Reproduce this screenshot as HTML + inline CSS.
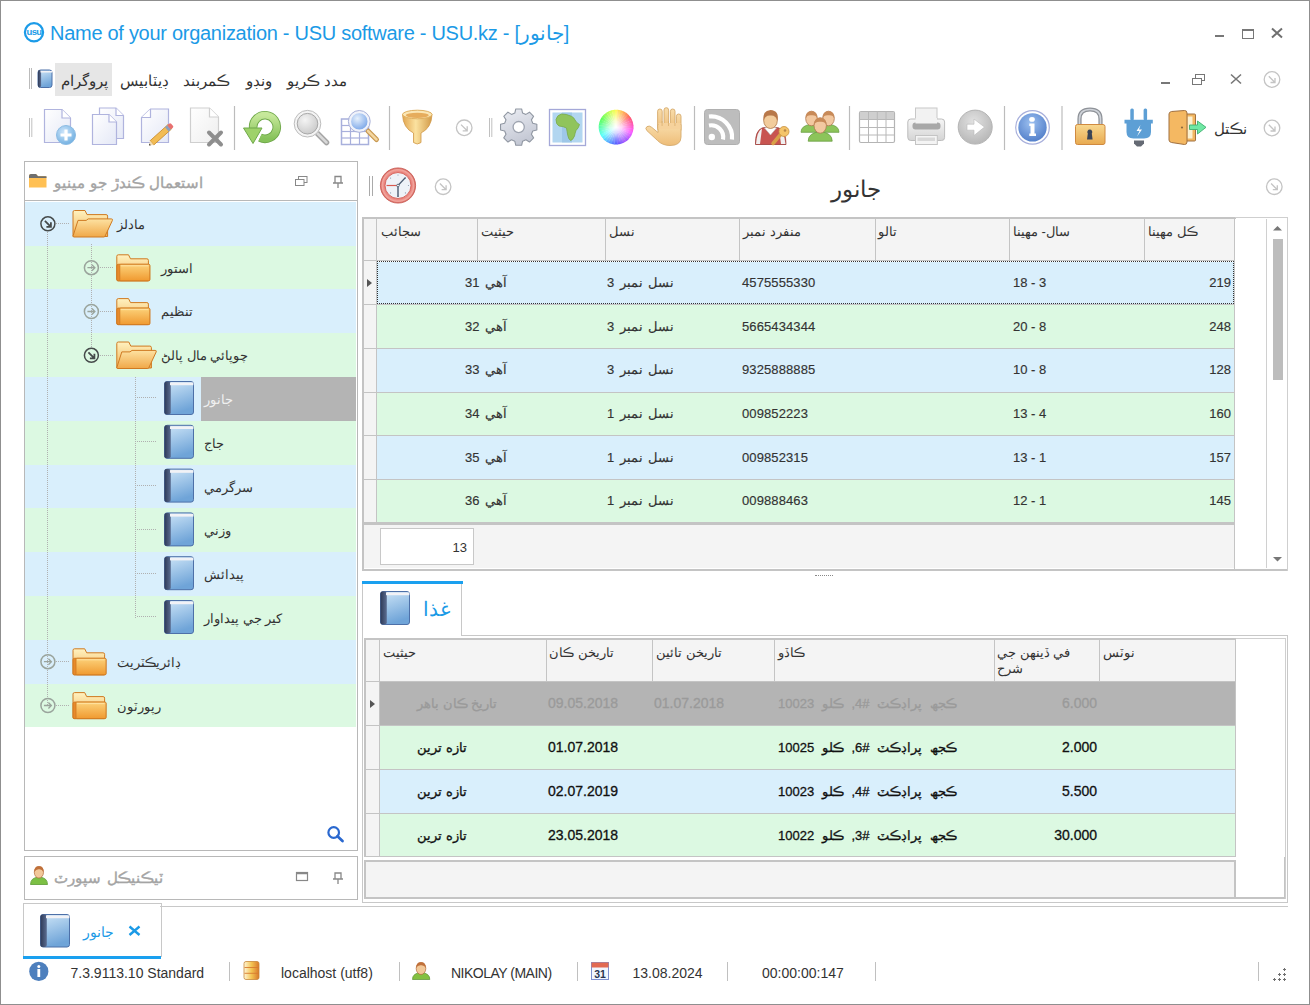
<!DOCTYPE html>
<html><head><meta charset="utf-8"><style>
html,body{margin:0;padding:0}
body{width:1310px;height:1005px;position:relative;overflow:hidden;background:#fff;font-family:"Liberation Sans", sans-serif}
.a{position:absolute}
.t{white-space:nowrap;font-family:"Liberation Sans", sans-serif}
svg{position:absolute;overflow:visible}
</style></head><body>
<div class="a" style="left:0px;top:0px;width:1308px;height:1003px;border:1px solid #8f8f8f"></div>
<svg style="left:23px;top:22px" width="22" height="22" viewBox="0 0 22 22"><circle cx="11" cy="10.3" r="9.1" fill="#fff" stroke="#1b9be8" stroke-width="2.2"/><text x="11" y="13" font-size="9.5" font-weight="bold" text-anchor="middle" fill="#1b9be8" font-family="Liberation Sans" letter-spacing="-0.6">usu</text></svg>
<div class="a t" style="top:22.77px;font-size:20px;line-height:20px;color:#1b9ae6;left:50px;letter-spacing:-0.28px">Name of your organization - USU software - USU.kz - [جانور]</div>
<div class="a t" style="top:120.80px;font-size:15px;line-height:15px;color:#333;left:1213.5px;">نڪتل</div>
<div class="a" style="left:1215px;top:35px;width:9px;height:2px;background:#777"></div>
<div class="a" style="left:1242px;top:29px;width:10px;height:7px;border:1px solid #777;border-top-width:2px"></div>
<svg style="left:1271px;top:28px" width="12" height="10" viewBox="0 0 12 10"><path d="M1 0.5 L11 9.5 M11 0.5 L1 9.5" stroke="#707070" stroke-width="2"/></svg>
<div class="a" style="left:29px;top:68px;width:1px;height:21px;background:#bbb"></div>
<div class="a" style="left:31px;top:68px;width:1px;height:21px;background:#bbb"></div>
<div class="a" style="left:55px;top:63px;width:57px;height:33px;background:#e6e6e6"></div>
<div class="a t" style="top:72.80px;font-size:15px;line-height:15px;color:#333;left:61px;">پروگرام</div>
<div class="a t" style="top:72.80px;font-size:15px;line-height:15px;color:#333;left:120px;">ڊيٽابيس</div>
<div class="a t" style="top:72.80px;font-size:15px;line-height:15px;color:#333;left:183px;">ڪمربند</div>
<div class="a t" style="top:72.80px;font-size:15px;line-height:15px;color:#333;left:246px;">ونڊو</div>
<div class="a t" style="top:72.80px;font-size:15px;line-height:15px;color:#333;left:287px;">مدد ڪريو</div>
<div class="a" style="left:1161px;top:82px;width:9px;height:2px;background:#777"></div>
<svg style="left:1192px;top:74px" width="14" height="12" viewBox="0 0 14 12"><rect x="3.5" y="0.5" width="9" height="6" fill="none" stroke="#777"/><rect x="0.5" y="4.5" width="9" height="6" fill="#fff" stroke="#777"/></svg>
<svg style="left:1230px;top:74px" width="12" height="10" viewBox="0 0 12 10"><path d="M1 0.5 L11 9.5 M11 0.5 L1 9.5" stroke="#777" stroke-width="1.6"/></svg>
<div class="a" style="left:24px;top:161px;width:332px;height:688px;border:1px solid #b8b8b8;background:#fff"></div>
<div class="a" style="left:25px;top:200px;width:332px;height:1px;background:#b8b8b8"></div>
<div class="a t" style="top:174.80px;font-size:15px;line-height:15px;color:#a4a4a4;left:54px;word-spacing:0.6px;-webkit-text-stroke:0.4px #a4a4a4">استعمال ڪندڙ جو مينيو</div>
<div class="a" style="left:25px;top:201.80px;width:331px;height:43.8px;background:#d9effc"></div>
<div class="a" style="left:25px;top:245.60px;width:331px;height:43.8px;background:#dcf9e2"></div>
<div class="a" style="left:25px;top:289.40px;width:331px;height:43.8px;background:#d9effc"></div>
<div class="a" style="left:25px;top:333.20px;width:331px;height:43.8px;background:#dcf9e2"></div>
<div class="a" style="left:25px;top:377.00px;width:331px;height:43.8px;background:#d9effc"></div>
<div class="a" style="left:25px;top:420.80px;width:331px;height:43.8px;background:#dcf9e2"></div>
<div class="a" style="left:25px;top:464.60px;width:331px;height:43.8px;background:#d9effc"></div>
<div class="a" style="left:25px;top:508.40px;width:331px;height:43.8px;background:#dcf9e2"></div>
<div class="a" style="left:25px;top:552.20px;width:331px;height:43.8px;background:#d9effc"></div>
<div class="a" style="left:25px;top:596.00px;width:331px;height:43.8px;background:#dcf9e2"></div>
<div class="a" style="left:25px;top:639.80px;width:331px;height:43.8px;background:#d9effc"></div>
<div class="a" style="left:25px;top:683.60px;width:331px;height:43.8px;background:#dcf9e2"></div>
<div class="a" style="left:201px;top:377.00px;width:155px;height:43.8px;background:#b4b4b4"></div>
<div class="a t" style="top:217.70px;font-size:13px;line-height:13px;color:#333;left:117px;">مادلز</div>
<div class="a t" style="top:261.50px;font-size:13px;line-height:13px;color:#333;left:161px;">استور</div>
<div class="a t" style="top:305.30px;font-size:13px;line-height:13px;color:#333;left:161px;">تنظيم</div>
<div class="a t" style="top:349.10px;font-size:13px;line-height:13px;color:#333;left:161px;">چوپائي مال پالڻ</div>
<div class="a t" style="top:392.90px;font-size:13px;line-height:13px;color:#f0f0f0;left:204px;">جانور</div>
<div class="a t" style="top:436.70px;font-size:13px;line-height:13px;color:#333;left:204px;">جاج</div>
<div class="a t" style="top:480.50px;font-size:13px;line-height:13px;color:#333;left:204px;">سرگرمي</div>
<div class="a t" style="top:524.30px;font-size:13px;line-height:13px;color:#333;left:204px;">وزني</div>
<div class="a t" style="top:568.10px;font-size:13px;line-height:13px;color:#333;left:204px;">پيدائش</div>
<div class="a t" style="top:611.90px;font-size:13px;line-height:13px;color:#333;left:204px;">كير جي پيداوار</div>
<div class="a t" style="top:655.70px;font-size:13px;line-height:13px;color:#333;left:117px;">ڊائريڪٽريٽ</div>
<div class="a t" style="top:699.50px;font-size:13px;line-height:13px;color:#333;left:117px;">رپورٽون</div>
<div class="a" style="left:24px;top:856px;width:332px;height:42px;border:1px solid #b8b8b8;background:#fff"></div>
<div class="a t" style="top:869.80px;font-size:15px;line-height:15px;color:#a4a4a4;left:54px;word-spacing:2px;-webkit-text-stroke:0.4px #a4a4a4">ٽيڪنيڪل سپورٽ</div>
<div class="a" style="left:23px;top:903px;width:137px;height:53px;border:1px solid #c8c8c8;border-bottom:none;background:#fff"></div>
<div class="a" style="left:160px;top:906px;width:1128px;height:1px;background:#c8c8c8"></div>
<div class="a" style="left:23px;top:956px;width:138px;height:3px;background:#1aa0ef"></div>
<div class="a t" style="top:925.15px;font-size:14px;line-height:14px;color:#1b9ae6;left:83px;">جانور</div>
<div class="a t" style="top:965.65px;font-size:14px;line-height:14px;color:#333;left:70.5px;">7.3.9113.10 Standard</div>
<div class="a t" style="top:965.65px;font-size:14px;line-height:14px;color:#333;left:281px;">localhost (utf8)</div>
<div class="a t" style="top:965.65px;font-size:14px;line-height:14px;color:#333;left:451px;letter-spacing:-0.5px">NIKOLAY (MAIN)</div>
<div class="a t" style="top:965.65px;font-size:14px;line-height:14px;color:#333;left:632.5px;">13.08.2024</div>
<div class="a t" style="top:965.65px;font-size:14px;line-height:14px;color:#333;left:762px;">00:00:00:147</div>
<div class="a" style="left:229px;top:962px;width:1px;height:19px;background:#c0c0c0"></div>
<div class="a" style="left:399px;top:962px;width:1px;height:19px;background:#c0c0c0"></div>
<div class="a" style="left:577px;top:962px;width:1px;height:19px;background:#c0c0c0"></div>
<div class="a" style="left:727px;top:962px;width:1px;height:19px;background:#c0c0c0"></div>
<div class="a" style="left:875px;top:962px;width:1px;height:19px;background:#c0c0c0"></div>
<div class="a" style="left:1258px;top:962px;width:1px;height:19px;background:#c0c0c0"></div>
<div class="a" style="left:369px;top:176px;width:1px;height:20px;background:#aaa"></div>
<div class="a" style="left:372px;top:176px;width:1px;height:20px;background:#aaa"></div>
<div class="a t" style="top:177.53px;font-size:23px;line-height:23px;color:#333;left:556px;width:600px;text-align:center;">جانور</div>
<div class="a" style="left:362px;top:217px;width:924px;height:351px;border:2px solid #c4c4c4;background:#fff;box-sizing:border-box;width:926px;height:354px"></div>
<div class="a" style="left:364px;top:219px;width:871px;height:41.5px;background:#f4f4f4"></div>
<div class="a" style="left:364px;top:260px;width:871px;height:1px;background:#c4c4c4"></div>
<div class="a" style="left:364px;top:261px;width:12px;height:262px;background:#f4f4f4"></div>
<div class="a" style="left:376px;top:219px;width:1px;height:304px;background:#c4c4c4"></div>
<div class="a" style="left:477px;top:219px;width:1px;height:304px;background:#c4c4c4"></div>
<div class="a" style="left:605px;top:219px;width:1px;height:304px;background:#c4c4c4"></div>
<div class="a" style="left:739px;top:219px;width:1px;height:304px;background:#c4c4c4"></div>
<div class="a" style="left:875px;top:219px;width:1px;height:304px;background:#c4c4c4"></div>
<div class="a" style="left:1009px;top:219px;width:1px;height:304px;background:#c4c4c4"></div>
<div class="a" style="left:1144px;top:219px;width:1px;height:304px;background:#c4c4c4"></div>
<div class="a" style="left:1234px;top:219px;width:1px;height:304px;background:#c4c4c4"></div>
<div class="a t" style="top:225.00px;font-size:13px;line-height:13px;color:#333;left:381px;">سجائب</div>
<div class="a t" style="top:225.00px;font-size:13px;line-height:13px;color:#333;left:481px;">حيثيت</div>
<div class="a t" style="top:225.00px;font-size:13px;line-height:13px;color:#333;left:609px;">نسل</div>
<div class="a t" style="top:225.00px;font-size:13px;line-height:13px;color:#333;left:743px;">منفرد نمبر</div>
<div class="a t" style="top:225.00px;font-size:13px;line-height:13px;color:#333;left:878px;">تالو</div>
<div class="a t" style="top:225.00px;font-size:13px;line-height:13px;color:#333;left:1013px;">سال- مهينا</div>
<div class="a t" style="top:225.00px;font-size:13px;line-height:13px;color:#333;left:1148px;">ڪل مهينا</div>
<div class="a" style="left:377px;top:261.60px;width:857px;height:42.65px;background:#d9effc"></div>
<div class="a" style="left:364px;top:304px;width:871px;height:1px;background:#c4c4c4"></div>
<div class="a t" style="top:275.90px;font-size:13px;line-height:13px;color:#333;right:803px;text-align:right;word-spacing:2px;-webkit-text-stroke:0.15px #333;letter-spacing:0.4px">آهي 31</div>
<div class="a t" style="top:275.90px;font-size:13px;line-height:13px;color:#333;left:607px;word-spacing:2px;-webkit-text-stroke:0.15px #333">نسل نمبر 3</div>
<div class="a t" style="top:275.90px;font-size:13px;line-height:13px;color:#333;left:742px;-webkit-text-stroke:0.15px #333;letter-spacing:0.1px">4575555330</div>
<div class="a t" style="top:275.90px;font-size:13px;line-height:13px;color:#333;left:1013px;-webkit-text-stroke:0.15px #333">18 - 3</div>
<div class="a t" style="top:275.90px;font-size:13px;line-height:13px;color:#333;right:79px;text-align:right;-webkit-text-stroke:0.15px #333">219</div>
<div class="a" style="left:377px;top:305.25px;width:857px;height:42.65px;background:#dcf9e2"></div>
<div class="a" style="left:364px;top:348px;width:871px;height:1px;background:#c4c4c4"></div>
<div class="a t" style="top:319.55px;font-size:13px;line-height:13px;color:#333;right:803px;text-align:right;word-spacing:2px;-webkit-text-stroke:0.15px #333;letter-spacing:0.4px">آهي 32</div>
<div class="a t" style="top:319.55px;font-size:13px;line-height:13px;color:#333;left:607px;word-spacing:2px;-webkit-text-stroke:0.15px #333">نسل نمبر 3</div>
<div class="a t" style="top:319.55px;font-size:13px;line-height:13px;color:#333;left:742px;-webkit-text-stroke:0.15px #333;letter-spacing:0.1px">5665434344</div>
<div class="a t" style="top:319.55px;font-size:13px;line-height:13px;color:#333;left:1013px;-webkit-text-stroke:0.15px #333">20 - 8</div>
<div class="a t" style="top:319.55px;font-size:13px;line-height:13px;color:#333;right:79px;text-align:right;-webkit-text-stroke:0.15px #333">248</div>
<div class="a" style="left:377px;top:348.90px;width:857px;height:42.65px;background:#d9effc"></div>
<div class="a" style="left:364px;top:392px;width:871px;height:1px;background:#c4c4c4"></div>
<div class="a t" style="top:363.20px;font-size:13px;line-height:13px;color:#333;right:803px;text-align:right;word-spacing:2px;-webkit-text-stroke:0.15px #333;letter-spacing:0.4px">آهي 33</div>
<div class="a t" style="top:363.20px;font-size:13px;line-height:13px;color:#333;left:607px;word-spacing:2px;-webkit-text-stroke:0.15px #333">نسل نمبر 3</div>
<div class="a t" style="top:363.20px;font-size:13px;line-height:13px;color:#333;left:742px;-webkit-text-stroke:0.15px #333;letter-spacing:0.1px">9325888885</div>
<div class="a t" style="top:363.20px;font-size:13px;line-height:13px;color:#333;left:1013px;-webkit-text-stroke:0.15px #333">10 - 8</div>
<div class="a t" style="top:363.20px;font-size:13px;line-height:13px;color:#333;right:79px;text-align:right;-webkit-text-stroke:0.15px #333">128</div>
<div class="a" style="left:377px;top:392.55px;width:857px;height:42.65px;background:#dcf9e2"></div>
<div class="a" style="left:364px;top:435px;width:871px;height:1px;background:#c4c4c4"></div>
<div class="a t" style="top:406.85px;font-size:13px;line-height:13px;color:#333;right:803px;text-align:right;word-spacing:2px;-webkit-text-stroke:0.15px #333;letter-spacing:0.4px">آهي 34</div>
<div class="a t" style="top:406.85px;font-size:13px;line-height:13px;color:#333;left:607px;word-spacing:2px;-webkit-text-stroke:0.15px #333">نسل نمبر 1</div>
<div class="a t" style="top:406.85px;font-size:13px;line-height:13px;color:#333;left:742px;-webkit-text-stroke:0.15px #333;letter-spacing:0.1px">009852223</div>
<div class="a t" style="top:406.85px;font-size:13px;line-height:13px;color:#333;left:1013px;-webkit-text-stroke:0.15px #333">13 - 4</div>
<div class="a t" style="top:406.85px;font-size:13px;line-height:13px;color:#333;right:79px;text-align:right;-webkit-text-stroke:0.15px #333">160</div>
<div class="a" style="left:377px;top:436.20px;width:857px;height:42.65px;background:#d9effc"></div>
<div class="a" style="left:364px;top:479px;width:871px;height:1px;background:#c4c4c4"></div>
<div class="a t" style="top:450.50px;font-size:13px;line-height:13px;color:#333;right:803px;text-align:right;word-spacing:2px;-webkit-text-stroke:0.15px #333;letter-spacing:0.4px">آهي 35</div>
<div class="a t" style="top:450.50px;font-size:13px;line-height:13px;color:#333;left:607px;word-spacing:2px;-webkit-text-stroke:0.15px #333">نسل نمبر 1</div>
<div class="a t" style="top:450.50px;font-size:13px;line-height:13px;color:#333;left:742px;-webkit-text-stroke:0.15px #333;letter-spacing:0.1px">009852315</div>
<div class="a t" style="top:450.50px;font-size:13px;line-height:13px;color:#333;left:1013px;-webkit-text-stroke:0.15px #333">13 - 1</div>
<div class="a t" style="top:450.50px;font-size:13px;line-height:13px;color:#333;right:79px;text-align:right;-webkit-text-stroke:0.15px #333">157</div>
<div class="a" style="left:377px;top:479.85px;width:857px;height:42.65px;background:#dcf9e2"></div>
<div class="a" style="left:364px;top:522px;width:871px;height:1px;background:#c4c4c4"></div>
<div class="a t" style="top:494.15px;font-size:13px;line-height:13px;color:#333;right:803px;text-align:right;word-spacing:2px;-webkit-text-stroke:0.15px #333;letter-spacing:0.4px">آهي 36</div>
<div class="a t" style="top:494.15px;font-size:13px;line-height:13px;color:#333;left:607px;word-spacing:2px;-webkit-text-stroke:0.15px #333">نسل نمبر 1</div>
<div class="a t" style="top:494.15px;font-size:13px;line-height:13px;color:#333;left:742px;-webkit-text-stroke:0.15px #333;letter-spacing:0.1px">009888463</div>
<div class="a t" style="top:494.15px;font-size:13px;line-height:13px;color:#333;left:1013px;-webkit-text-stroke:0.15px #333">12 - 1</div>
<div class="a t" style="top:494.15px;font-size:13px;line-height:13px;color:#333;right:79px;text-align:right;-webkit-text-stroke:0.15px #333">145</div>
<div class="a" style="left:377px;top:261px;width:855px;height:41px;border:1px dotted #333"></div>
<svg style="left:367px;top:279px" width="6" height="8"><path d="M0 0 L5 4 L0 8Z" fill="#555"/></svg>
<div class="a" style="left:364px;top:524px;width:871px;height:44px;background:#f4f4f4"></div>
<div class="a" style="left:364px;top:523px;width:871px;height:2px;background:#c4c4c4"></div>
<div class="a" style="left:380px;top:528px;width:94px;height:37px;border:1px solid #c8c8c8;background:#fff;box-sizing:border-box"></div>
<div class="a t" style="top:541.00px;font-size:13px;line-height:13px;color:#333;right:843px;text-align:right;">13</div>
<div class="a" style="left:1236px;top:217px;width:52px;height:2px;background:#fff"></div>
<div class="a" style="left:1286px;top:217px;width:2px;height:352px;background:#fff"></div>
<div class="a" style="left:1235px;top:217px;width:53px;height:1px;background:#cfcfcf"></div>
<div class="a" style="left:1287px;top:217px;width:1px;height:354px;background:#cfcfcf"></div>
<div class="a" style="left:1234px;top:523px;width:1px;height:46px;background:#c4c4c4"></div>
<div class="a" style="left:1266px;top:219px;width:1px;height:349px;background:#d0d0d0"></div>
<div class="a" style="left:1273px;top:239px;width:10px;height:141px;background:#bdbdbd"></div>
<svg style="left:1273px;top:226px" width="9" height="5"><path d="M0 4.5 L4.5 0 L9 4.5Z" fill="#777"/></svg>
<svg style="left:1273px;top:557px" width="9" height="5"><path d="M0 0 L4.5 4.5 L9 0Z" fill="#777"/></svg>
<div class="a" style="left:815px;top:575px;width:18px;height:1px;border-top:1px dotted #888"></div>
<div class="a" style="left:362px;top:581px;width:100px;height:55px;border:1px solid #c8c8c8;border-bottom:none;background:#fff;box-sizing:border-box"></div>
<div class="a" style="left:362px;top:581px;width:101px;height:3px;background:#1aa0ef"></div>
<div class="a t" style="top:599.07px;font-size:20px;line-height:20px;color:#1b9ae6;left:423px;">غذا</div>
<div class="a" style="left:362px;top:635px;width:926px;height:268px;border:1px solid #c8c8c8;box-sizing:border-box"></div>
<div class="a" style="left:363px;top:635px;width:98px;height:1px;background:#fff"></div>
<div class="a" style="left:364px;top:638px;width:922px;height:261px;border:2px solid #c4c4c4;box-sizing:border-box;background:#fff"></div>
<div class="a" style="left:1236px;top:638px;width:50px;height:2px;background:#fff"></div>
<div class="a" style="left:1284px;top:638px;width:2px;height:219px;background:#fff"></div>
<div class="a" style="left:1236px;top:638px;width:50px;height:1px;background:#cfcfcf"></div>
<div class="a" style="left:1285px;top:638px;width:1px;height:261px;background:#cfcfcf"></div>
<div class="a" style="left:366px;top:640px;width:869px;height:41px;background:#f4f4f4"></div>
<div class="a" style="left:366px;top:681px;width:870px;height:1px;background:#c4c4c4"></div>
<div class="a" style="left:366px;top:682px;width:13px;height:174px;background:#f4f4f4"></div>
<div class="a" style="left:379px;top:640px;width:1px;height:216px;background:#c4c4c4"></div>
<div class="a" style="left:546px;top:640px;width:1px;height:216px;background:#c4c4c4"></div>
<div class="a" style="left:652px;top:640px;width:1px;height:216px;background:#c4c4c4"></div>
<div class="a" style="left:774px;top:640px;width:1px;height:216px;background:#c4c4c4"></div>
<div class="a" style="left:994px;top:640px;width:1px;height:216px;background:#c4c4c4"></div>
<div class="a" style="left:1099px;top:640px;width:1px;height:216px;background:#c4c4c4"></div>
<div class="a" style="left:1235px;top:640px;width:1px;height:216px;background:#c4c4c4"></div>
<div class="a t" style="top:646.00px;font-size:13px;line-height:13px;color:#333;left:383px;">حيثيت</div>
<div class="a t" style="top:646.00px;font-size:13px;line-height:13px;color:#333;left:549px;">تاريخن ڪان</div>
<div class="a t" style="top:646.00px;font-size:13px;line-height:13px;color:#333;left:656px;">تاريخن تائين</div>
<div class="a t" style="top:646.00px;font-size:13px;line-height:13px;color:#333;left:778px;">ڪاڏو</div>
<div class="a t" style="top:646.00px;font-size:13px;line-height:13px;color:#333;left:997px;">في ڏينهن جي</div>
<div class="a t" style="top:646.00px;font-size:13px;line-height:13px;color:#333;left:1103px;">نوٽس</div>
<div class="a t" style="top:662.00px;font-size:13px;line-height:13px;color:#333;left:997px;">شرح</div>
<div class="a" style="left:380px;top:682px;width:855px;height:43px;background:#b4b4b4"></div>
<div class="a" style="left:366px;top:725px;width:870px;height:1px;background:#c4c4c4"></div>
<div class="a t" style="top:697.30px;font-size:13px;line-height:13px;color:#9a9a9a;left:417px;-webkit-text-stroke:0.3px #9a9a9a;">تاريخ ڪان باهر</div>
<div class="a t" style="top:696.45px;font-size:14px;line-height:14px;color:#9a9a9a;left:548px;-webkit-text-stroke:0.3px #9a9a9a;">09.05.2018</div>
<div class="a t" style="top:696.45px;font-size:14px;line-height:14px;color:#9a9a9a;left:654px;-webkit-text-stroke:0.3px #9a9a9a;">01.07.2018</div>
<div class="a t" style="top:697.30px;font-size:13px;line-height:13px;color:#9a9a9a;left:778px;-webkit-text-stroke:0.3px #9a9a9a;word-spacing:4px">ڪجھ پراڊڪٽ #4, ڪلو 10023</div>
<div class="a t" style="top:696.45px;font-size:14px;line-height:14px;color:#9a9a9a;right:213px;text-align:right;-webkit-text-stroke:0.3px #9a9a9a;">6.000</div>
<div class="a" style="left:380px;top:726px;width:855px;height:43px;background:#dcf9e2"></div>
<div class="a" style="left:366px;top:769px;width:870px;height:1px;background:#c4c4c4"></div>
<div class="a t" style="top:741.30px;font-size:13px;line-height:13px;color:#111;left:417px;-webkit-text-stroke:0.3px #111;">تازه ترين</div>
<div class="a t" style="top:740.45px;font-size:14px;line-height:14px;color:#111;left:548px;-webkit-text-stroke:0.3px #111;">01.07.2018</div>
<div class="a t" style="top:741.30px;font-size:13px;line-height:13px;color:#111;left:778px;-webkit-text-stroke:0.3px #111;word-spacing:4px">ڪجھ پراڊڪٽ #6, ڪلو 10025</div>
<div class="a t" style="top:740.45px;font-size:14px;line-height:14px;color:#111;right:213px;text-align:right;-webkit-text-stroke:0.3px #111;">2.000</div>
<div class="a" style="left:380px;top:770px;width:855px;height:43px;background:#d9effc"></div>
<div class="a" style="left:366px;top:813px;width:870px;height:1px;background:#c4c4c4"></div>
<div class="a t" style="top:785.30px;font-size:13px;line-height:13px;color:#111;left:417px;-webkit-text-stroke:0.3px #111;">تازه ترين</div>
<div class="a t" style="top:784.45px;font-size:14px;line-height:14px;color:#111;left:548px;-webkit-text-stroke:0.3px #111;">02.07.2019</div>
<div class="a t" style="top:785.30px;font-size:13px;line-height:13px;color:#111;left:778px;-webkit-text-stroke:0.3px #111;word-spacing:4px">ڪجھ پراڊڪٽ #4, ڪلو 10023</div>
<div class="a t" style="top:784.45px;font-size:14px;line-height:14px;color:#111;right:213px;text-align:right;-webkit-text-stroke:0.3px #111;">5.500</div>
<div class="a" style="left:380px;top:814px;width:855px;height:42px;background:#dcf9e2"></div>
<div class="a" style="left:366px;top:856px;width:870px;height:1px;background:#c4c4c4"></div>
<div class="a t" style="top:829.30px;font-size:13px;line-height:13px;color:#111;left:417px;-webkit-text-stroke:0.3px #111;">تازه ترين</div>
<div class="a t" style="top:828.45px;font-size:14px;line-height:14px;color:#111;left:548px;-webkit-text-stroke:0.3px #111;">23.05.2018</div>
<div class="a t" style="top:829.30px;font-size:13px;line-height:13px;color:#111;left:778px;-webkit-text-stroke:0.3px #111;word-spacing:4px">ڪجھ پراڊڪٽ #3, ڪلو 10022</div>
<div class="a t" style="top:828.45px;font-size:14px;line-height:14px;color:#111;right:213px;text-align:right;-webkit-text-stroke:0.3px #111;">30.000</div>
<svg style="left:370px;top:700px" width="6" height="8"><path d="M0 0 L5 4 L0 8Z" fill="#555"/></svg>
<div class="a" style="left:364px;top:857px;width:872px;height:3px;background:#fff"></div>
<div class="a" style="left:364px;top:860px;width:872px;height:39px;border:2px solid #c4c4c4;box-sizing:border-box;background:#f4f4f4"></div>
<svg style="left:0;top:0" width="1310" height="1005" viewBox="0 0 1310 1005">
<defs>
<linearGradient id="gDoc" x1="0" y1="0" x2="1" y2="1"><stop offset="0" stop-color="#ffffff"/><stop offset="1" stop-color="#e4e8f6"/></linearGradient>
<linearGradient id="gDocG" x1="0" y1="0" x2="1" y2="1"><stop offset="0" stop-color="#ffffff"/><stop offset="1" stop-color="#eeeeee"/></linearGradient>
<radialGradient id="gPlus" cx="0.4" cy="0.35" r="0.7"><stop offset="0" stop-color="#cfe6fb"/><stop offset="1" stop-color="#6eaee0"/></radialGradient>
<linearGradient id="gGreen" x1="0" y1="0" x2="0" y2="1"><stop offset="0" stop-color="#c6e89a"/><stop offset="1" stop-color="#86c25a"/></linearGradient>
<radialGradient id="gLens" cx="0.4" cy="0.35" r="0.7"><stop offset="0" stop-color="#f4f4f4"/><stop offset="1" stop-color="#c4c4c4"/></radialGradient>
<radialGradient id="gLensB" cx="0.4" cy="0.35" r="0.7"><stop offset="0" stop-color="#e6f0fc"/><stop offset="1" stop-color="#6f9ee6"/></radialGradient>
<linearGradient id="gGold" x1="0" y1="0" x2="1" y2="0"><stop offset="0" stop-color="#e2a650"/><stop offset="0.45" stop-color="#fbe2a0"/><stop offset="1" stop-color="#d29a48"/></linearGradient>
<linearGradient id="gGear" x1="0" y1="0" x2="0.4" y2="1"><stop offset="0" stop-color="#eceef4"/><stop offset="1" stop-color="#c4c8d4"/></linearGradient>
<radialGradient id="gWheelW" cx="0.5" cy="0.5" r="0.5"><stop offset="0" stop-color="#fff" stop-opacity="1"/><stop offset="0.35" stop-color="#fff" stop-opacity="0.7"/><stop offset="1" stop-color="#fff" stop-opacity="0"/></radialGradient>
<linearGradient id="gHand" x1="0" y1="0" x2="0" y2="1"><stop offset="0" stop-color="#f8dcaa"/><stop offset="1" stop-color="#eebd78"/></linearGradient>
<linearGradient id="gBook" x1="0" y1="0" x2="0.3" y2="1"><stop offset="0" stop-color="#cfe6f8"/><stop offset="1" stop-color="#6fa4d8"/></linearGradient>
<linearGradient id="gSpine" x1="0" y1="0" x2="1" y2="0"><stop offset="0" stop-color="#2e3a58"/><stop offset="1" stop-color="#5a6c90"/></linearGradient>
<linearGradient id="gFold" x1="0" y1="0" x2="0" y2="1"><stop offset="0" stop-color="#fff2c0"/><stop offset="1" stop-color="#f2b458"/></linearGradient>
<linearGradient id="gFoldF" x1="0" y1="0" x2="0" y2="1"><stop offset="0" stop-color="#fcd27a"/><stop offset="1" stop-color="#f09a30"/></linearGradient>
<linearGradient id="gFoldO" x1="0" y1="0" x2="0" y2="1"><stop offset="0" stop-color="#fde2a2"/><stop offset="1" stop-color="#f0a848"/></linearGradient>
<linearGradient id="gLock" x1="0" y1="0" x2="0" y2="1"><stop offset="0" stop-color="#f8d890"/><stop offset="1" stop-color="#e8aa50"/></linearGradient>
<radialGradient id="gInfo" cx="0.45" cy="0.35" r="0.7"><stop offset="0" stop-color="#9cc0f0"/><stop offset="1" stop-color="#4f7cc8"/></radialGradient>
<radialGradient id="gGray" cx="0.45" cy="0.35" r="0.7"><stop offset="0" stop-color="#e2e2e2"/><stop offset="1" stop-color="#b4b4b4"/></radialGradient>
<linearGradient id="gPrint" x1="0" y1="0" x2="0" y2="1"><stop offset="0" stop-color="#f6f6f6"/><stop offset="1" stop-color="#d4d4d4"/></linearGradient>
<linearGradient id="gDB" x1="0" y1="0" x2="1" y2="0"><stop offset="0" stop-color="#fff6d8"/><stop offset="0.5" stop-color="#f4c452"/><stop offset="1" stop-color="#d8782a"/></linearGradient>
<radialGradient id="gClock" cx="0.5" cy="0.5" r="0.5"><stop offset="0.75" stop-color="#e87a74"/><stop offset="0.9" stop-color="#f2a8a0"/><stop offset="1" stop-color="#d05850"/></radialGradient>
</defs><rect x="38.0" y="70.0" width="14" height="17.5" rx="2.5" fill="url(#gBook)" stroke="#4d70a8" stroke-width="1"/><rect x="38.0" y="70.0" width="3.1" height="17.5" rx="2" fill="url(#gSpine)"/><rect x="40.5" y="71.0" width="11.7" height="1.5" fill="#f2f2f6"/><line x1="29.5" y1="118" x2="29.5" y2="137" stroke="#c0c0c0"/><line x1="31.8" y1="118" x2="31.8" y2="137" stroke="#c0c0c0"/><path d="M44.5 109.5 H62 L70.5 118 V142.5 H44.5Z" fill="url(#gDoc)" stroke="#b0b4de" stroke-width="1.2"/><path d="M62 109.5 V118 H70.5" fill="#fff" stroke="#b0b4de" stroke-width="1.2"/><circle cx="66" cy="135" r="9.5" fill="url(#gPlus)" stroke="#8cbce4" stroke-width="1"/><path d="M66 129.5 V140.5 M60.5 135 H71.5" stroke="#fff" stroke-width="3.2"/><path d="M99.5 108 H116 L123.5 115.5 V138.5 H99.5Z" fill="url(#gDoc)" stroke="#b0b4de" stroke-width="1.2"/><path d="M116 108 V115.5 H123.5" fill="#fff" stroke="#b0b4de" stroke-width="1.2"/><path d="M92.5 114.5 H109 L116.5 122 V144.5 H92.5Z" fill="url(#gDoc)" stroke="#b0b4de" stroke-width="1.2"/><path d="M109 114.5 V122 H116.5" fill="#fff" stroke="#b0b4de" stroke-width="1.2"/><path d="M150.5 109 H168.5 V142.5 H141.5 V117.5Z" fill="url(#gDoc)" stroke="#b0b4de" stroke-width="1.2"/><path d="M150.5 109 V117.5 H141.5" fill="#fff" stroke="#b0b4de" stroke-width="1.2"/><g transform="translate(149,145.5) rotate(-42)"><rect x="4" y="-2.8" width="24" height="5.6" fill="#f2bc54" stroke="#c88a2a" stroke-width="0.8"/><rect x="24" y="-2.8" width="3" height="5.6" fill="#8aa0c0"/><rect x="27" y="-2.8" width="4" height="5.6" rx="1.5" fill="#e87070"/><path d="M4 -2.8 L0 0 L4 2.8Z" fill="#f4dcb0"/><path d="M1.6 -1.1 L0 0 L1.6 1.1Z" fill="#333"/></g><path d="M190.5 108 H209.5 L218.5 117 V142.5 H190.5Z" fill="url(#gDocG)" stroke="#cfcfcf" stroke-width="1.2"/><path d="M209.5 108 V117 H218.5" fill="#fff" stroke="#cfcfcf" stroke-width="1.2"/><path d="M209 132.5 L221 144.5 M221 132.5 L209 144.5" stroke="#8e8e8e" stroke-width="4" stroke-linecap="round"/><line x1="234.5" y1="106" x2="234.5" y2="150" stroke="#bcbcbc" stroke-width="1.2"/><line x1="389.5" y1="106" x2="389.5" y2="150" stroke="#bcbcbc" stroke-width="1.2"/><line x1="694.5" y1="106" x2="694.5" y2="150" stroke="#bcbcbc" stroke-width="1.2"/><line x1="849.5" y1="106" x2="849.5" y2="150" stroke="#bcbcbc" stroke-width="1.2"/><line x1="1004.5" y1="106" x2="1004.5" y2="150" stroke="#bcbcbc" stroke-width="1.2"/><line x1="1062" y1="106" x2="1062" y2="150" stroke="#bcbcbc" stroke-width="1.2"/><path d="M260 137.7 A11.8 11.8 0 1 0 253.2 128" fill="none" stroke="#6fa84a" stroke-width="8.6"/><path d="M260 137.7 A11.8 11.8 0 1 0 253.2 128" fill="none" stroke="url(#gGreen)" stroke-width="6.8"/><path d="M243.5 128 H262 L253 143.5Z" fill="#9ed26a" stroke="#6fa84a" stroke-width="1" stroke-linejoin="round"/><line x1="317" y1="133" x2="326.5" y2="142.5" stroke="#a4a4a4" stroke-width="5.5" stroke-linecap="round"/><line x1="317" y1="133" x2="326.5" y2="142.5" stroke="#d8d8d8" stroke-width="2.5" stroke-linecap="round"/><circle cx="307.5" cy="123.7" r="12" fill="url(#gLens)" stroke="#f4f4f4" stroke-width="3"/><circle cx="307.5" cy="123.7" r="13.3" fill="none" stroke="#bdbdbd" stroke-width="1"/><circle cx="307.5" cy="123.7" r="10.3" fill="none" stroke="#a8a8a8" stroke-width="1"/><rect x="341.5" y="119" width="27" height="25.5" fill="#fff" stroke="#a8b0dc" stroke-width="1.5"/><line x1="341.5" y1="125.5" x2="368.5" y2="125.5" stroke="#a8b0dc" stroke-width="1.2"/><line x1="341.5" y1="131.5" x2="368.5" y2="131.5" stroke="#a8b0dc" stroke-width="1.2"/><line x1="341.5" y1="138" x2="368.5" y2="138" stroke="#a8b0dc" stroke-width="1.2"/><line x1="350.5" y1="119" x2="350.5" y2="144.5" stroke="#a8b0dc" stroke-width="1.2"/><line x1="359.5" y1="119" x2="359.5" y2="144.5" stroke="#a8b0dc" stroke-width="1.2"/><line x1="368" y1="131" x2="376.5" y2="139.5" stroke="#c89850" stroke-width="5" stroke-linecap="round"/><line x1="368" y1="131" x2="376.5" y2="139.5" stroke="#f4d6a0" stroke-width="2.5" stroke-linecap="round"/><circle cx="359.3" cy="121.4" r="9.5" fill="url(#gLensB)" stroke="#f0f2fa" stroke-width="2.6"/><circle cx="359.3" cy="121.4" r="10.9" fill="none" stroke="#a8b0d8" stroke-width="1"/><path d="M402.5 114.5 Q403 128 413.5 133 V142.5 Q417.3 145.5 421 142.5 V133 Q431.5 128 432 114.5Z" fill="url(#gGold)" stroke="#d09848" stroke-width="0.8"/><ellipse cx="417.3" cy="114.5" rx="14.8" ry="4.3" fill="#fbe6b4" stroke="#e0b060" stroke-width="1"/><ellipse cx="417.3" cy="115.3" rx="11.5" ry="2.6" fill="#e6ac5c"/><circle cx="464.2" cy="127.8" r="7.8" fill="none" stroke="#c4c4c4" stroke-width="1.3"/><path d="M461.0 124.6 L466.7 130.3 M467.2 126.3 V130.8 H462.7" fill="none" stroke="#c4c4c4" stroke-width="1.3"/><line x1="489.5" y1="118" x2="489.5" y2="137" stroke="#c0c0c0"/><line x1="491.8" y1="118" x2="491.8" y2="137" stroke="#c0c0c0"/><path d="M514.81 113.03 L515.77 108.94 L521.63 108.94 L522.59 113.03 L525.90 114.40 L529.47 112.18 L533.62 116.33 L531.40 119.90 L532.77 123.21 L536.86 124.17 L536.86 130.03 L532.77 130.99 L531.40 134.30 L533.62 137.87 L529.47 142.02 L525.90 139.80 L522.59 141.17 L521.63 145.26 L515.77 145.26 L514.81 141.17 L511.50 139.80 L507.93 142.02 L503.78 137.87 L506.00 134.30 L504.63 130.99 L500.54 130.03 L500.54 124.17 L504.63 123.21 L506.00 119.90 L503.78 116.33 L507.93 112.18 L511.50 114.40Z" fill="url(#gGear)" stroke="#9097a2" stroke-width="1.1" stroke-linejoin="round"/><circle cx="518.7" cy="127.1" r="5.6" fill="#fff" stroke="#9ea4b0" stroke-width="1.3"/><rect x="549.5" y="109.5" width="36" height="36" fill="#fff" stroke="#a4a8d8" stroke-width="1.3"/><rect x="552.5" y="112.5" width="30" height="30" fill="#b2d6f0"/><rect x="562" y="112.5" width="10" height="30" fill="#96c0e4" opacity="0.7"/><path d="M556 119.5 Q557 115 561.5 114 Q566 113.8 571.5 116.3 Q574 117.5 575 120 Q576.5 123 579.5 124.5 Q579 127.5 576 130.5 Q575 133 574.5 136 Q572.5 140.5 570.5 140.5 Q568.5 139 567.8 135.5 Q567 131 566.5 128 Q564 126.5 559 126 Q556 124.5 556 119.5Z" fill="#90c45c" stroke="#78aa4a" stroke-width="0.8"/><path d="M616.1 127.1 L614.58 109.77 A17.4 17.4 0 0 1 617.96 109.80Z" fill="#fff851"/><path d="M616.1 127.1 L617.62 109.77 A17.4 17.4 0 0 1 620.94 110.39Z" fill="#ffdb51"/><path d="M616.1 127.1 L620.60 110.29 A17.4 17.4 0 0 1 623.77 111.48Z" fill="#ffbe51"/><path d="M616.1 127.1 L623.45 111.33 A17.4 17.4 0 0 1 626.36 113.05Z" fill="#ffa151"/><path d="M616.1 127.1 L626.08 112.85 A17.4 17.4 0 0 1 628.65 115.04Z" fill="#ff8451"/><path d="M616.1 127.1 L628.40 114.80 A17.4 17.4 0 0 1 630.55 117.41Z" fill="#ff6751"/><path d="M616.1 127.1 L630.35 117.12 A17.4 17.4 0 0 1 632.01 120.06Z" fill="#ff5177"/><path d="M616.1 127.1 L631.87 119.75 A17.4 17.4 0 0 1 632.99 122.93Z" fill="#ff5194"/><path d="M616.1 127.1 L632.91 122.60 A17.4 17.4 0 0 1 633.46 125.93Z" fill="#ff51b1"/><path d="M616.1 127.1 L633.43 125.58 A17.4 17.4 0 0 1 633.40 128.96Z" fill="#ff51ce"/><path d="M616.1 127.1 L633.43 128.62 A17.4 17.4 0 0 1 632.81 131.94Z" fill="#ff51eb"/><path d="M616.1 127.1 L632.91 131.60 A17.4 17.4 0 0 1 631.72 134.77Z" fill="#f551ff"/><path d="M616.1 127.1 L631.87 134.45 A17.4 17.4 0 0 1 630.15 137.36Z" fill="#d851ff"/><path d="M616.1 127.1 L630.35 137.08 A17.4 17.4 0 0 1 628.16 139.65Z" fill="#bb51ff"/><path d="M616.1 127.1 L628.40 139.40 A17.4 17.4 0 0 1 625.79 141.55Z" fill="#9f51ff"/><path d="M616.1 127.1 L626.08 141.35 A17.4 17.4 0 0 1 623.14 143.01Z" fill="#a151ff"/><path d="M616.1 127.1 L623.45 142.87 A17.4 17.4 0 0 1 620.27 143.99Z" fill="#8451ff"/><path d="M616.1 127.1 L620.60 143.91 A17.4 17.4 0 0 1 617.27 144.46Z" fill="#6751ff"/><path d="M616.1 127.1 L617.62 144.43 A17.4 17.4 0 0 1 614.24 144.40Z" fill="#5158ff"/><path d="M616.1 127.1 L614.58 144.43 A17.4 17.4 0 0 1 611.26 143.81Z" fill="#5175ff"/><path d="M616.1 127.1 L611.60 143.91 A17.4 17.4 0 0 1 608.43 142.72Z" fill="#5192ff"/><path d="M616.1 127.1 L608.75 142.87 A17.4 17.4 0 0 1 605.84 141.15Z" fill="#51afff"/><path d="M616.1 127.1 L606.12 141.35 A17.4 17.4 0 0 1 603.55 139.16Z" fill="#51ccff"/><path d="M616.1 127.1 L603.80 139.40 A17.4 17.4 0 0 1 601.65 136.79Z" fill="#51e9ff"/><path d="M616.1 127.1 L601.85 137.08 A17.4 17.4 0 0 1 600.19 134.14Z" fill="#51fff8"/><path d="M616.1 127.1 L600.33 134.45 A17.4 17.4 0 0 1 599.21 131.27Z" fill="#51ffdb"/><path d="M616.1 127.1 L599.29 131.60 A17.4 17.4 0 0 1 598.74 128.27Z" fill="#51ffbe"/><path d="M616.1 127.1 L598.77 128.62 A17.4 17.4 0 0 1 598.80 125.24Z" fill="#51ffa1"/><path d="M616.1 127.1 L598.77 125.58 A17.4 17.4 0 0 1 599.39 122.26Z" fill="#51ff84"/><path d="M616.1 127.1 L599.29 122.60 A17.4 17.4 0 0 1 600.48 119.43Z" fill="#51ff67"/><path d="M616.1 127.1 L600.33 119.75 A17.4 17.4 0 0 1 602.05 116.84Z" fill="#58ff51"/><path d="M616.1 127.1 L601.85 117.12 A17.4 17.4 0 0 1 604.04 114.55Z" fill="#75ff51"/><path d="M616.1 127.1 L603.80 114.80 A17.4 17.4 0 0 1 606.41 112.65Z" fill="#92ff51"/><path d="M616.1 127.1 L606.12 112.85 A17.4 17.4 0 0 1 609.06 111.19Z" fill="#afff51"/><path d="M616.1 127.1 L608.75 111.33 A17.4 17.4 0 0 1 611.93 110.21Z" fill="#ccff51"/><path d="M616.1 127.1 L611.60 110.29 A17.4 17.4 0 0 1 614.93 109.74Z" fill="#e9ff51"/><circle cx="616.1" cy="127.1" r="17.4" fill="url(#gWheelW)"/><rect x="657.6" y="109" width="4.6" height="22" rx="2.3" fill="url(#gHand)" stroke="#d6aa6c" stroke-width="0.9"/><rect x="664.0" y="107.7" width="4.6" height="22" rx="2.3" fill="url(#gHand)" stroke="#d6aa6c" stroke-width="0.9"/><rect x="670.4" y="109" width="4.6" height="22" rx="2.3" fill="url(#gHand)" stroke="#d6aa6c" stroke-width="0.9"/><rect x="676.4" y="114" width="4.6" height="18" rx="2.3" fill="url(#gHand)" stroke="#d6aa6c" stroke-width="0.9"/><path d="M658 124.5 H681 V137 Q681 145.5 670 145.5 Q662.5 145.5 657.5 140.5 L646.8 130.5 Q644.8 128 647 126.6 Q649.2 125.2 651.8 127.4 L658 132.5Z" fill="url(#gHand)" stroke="#d6aa6c" stroke-width="0.9"/><rect x="658.5" y="123" width="22" height="6" fill="#f6d29c"/><path d="M662.1 121 V126 M668.5 121 V126 M674.9 123 V126" stroke="#d6aa6c" stroke-width="0.7"/><rect x="704.5" y="109.5" width="35" height="35" rx="3" fill="#bdbdbd" stroke="#b0b0b0" stroke-width="1"/><circle cx="711.8" cy="137" r="3.2" fill="#fff"/><path d="M709 125.5 A 12 12 0 0 1 723 139.5" fill="none" stroke="#fff" stroke-width="4.2"/><path d="M709 116.5 A 21 21 0 0 1 732 139.5" fill="none" stroke="#fff" stroke-width="4.2"/><path d="M755.5 144.5 Q755 131 762 128 L770.5 126.5 L779 128 Q786 131 786 144.5Z" fill="#c85450" stroke="#9a3a36" stroke-width="0.8"/><path d="M764.5 128 L770.5 135 L776.5 128 L772 126.5 H769Z" fill="#fff" stroke="#bbb" stroke-width="0.6"/><path d="M762 128.5 Q757 131 756 144 H760Z M779 128.5 Q784 131 785.5 144 H781Z" fill="#f0f0f0"/><ellipse cx="770.5" cy="120.5" rx="6.8" ry="8" fill="#f2cc9c" stroke="#b07848" stroke-width="0.8"/><path d="M763.5 121 Q762 110.5 770.5 110 Q779.5 110.5 777.5 121 Q776 115 770.5 115.5 Q765 115 763.5 121Z" fill="#b8784a"/><line x1="781" y1="134" x2="773" y2="143.5" stroke="#d8a048" stroke-width="3.5" stroke-linecap="round"/><circle cx="784" cy="131.5" r="5" fill="#f4c46a" stroke="#c89040" stroke-width="0.8"/><circle cx="785" cy="130.5" r="1.3" fill="#b8884a"/><path d="M801.0 132.3 Q801.0 125.3 811.5 124.3 Q822.0 125.3 822.0 132.3Z" fill="#8cc45a" stroke="#6a9e44" stroke-width="0.8"/><ellipse cx="811.5" cy="118.5" rx="5.8" ry="7.3" fill="#f2c8a0" stroke="#b07850" stroke-width="0.8"/><path d="M805.7 118.5 Q805.7 110.7 811.5 111.2 Q817.3 110.7 817.3 118.5 Q816.3 114.7 811.5 115.2 Q806.7 114.7 805.7 118.5Z" fill="#c88a58"/><path d="M818.0 132.3 Q818.0 125.3 828.5 124.3 Q839.0 125.3 839.0 132.3Z" fill="#8cc45a" stroke="#6a9e44" stroke-width="0.8"/><ellipse cx="828.5" cy="118.5" rx="5.8" ry="7.3" fill="#f2c8a0" stroke="#b07850" stroke-width="0.8"/><path d="M822.7 118.5 Q822.7 110.7 828.5 111.2 Q834.3 110.7 834.3 118.5 Q833.3 114.7 828.5 115.2 Q823.7 114.7 822.7 118.5Z" fill="#c88a58"/><path d="M808.2 141.2 Q808.2 132.7 820.2 131.7 Q832.2 132.7 832.2 141.2Z" fill="#8cc45a" stroke="#6a9e44" stroke-width="0.8"/><ellipse cx="820.2" cy="125.5" rx="6.2" ry="7.7" fill="#f2c8a0" stroke="#b07850" stroke-width="0.8"/><path d="M814.0 125.5 Q814.0 117.3 820.2 117.8 Q826.4000000000001 117.3 826.4000000000001 125.5 Q825.4000000000001 121.3 820.2 121.8 Q815.0 121.3 814.0 125.5Z" fill="#c88a58"/><rect x="859.5" y="111.5" width="35" height="31" rx="1.5" fill="#fff" stroke="#b4b4b4" stroke-width="1.2"/><rect x="860" y="112" width="34" height="7.5" fill="#cfcfcf"/><line x1="859.5" y1="119.5" x2="894.5" y2="119.5" stroke="#b8b8b8" stroke-width="1"/><line x1="859.5" y1="127.5" x2="894.5" y2="127.5" stroke="#b8b8b8" stroke-width="1"/><line x1="859.5" y1="135" x2="894.5" y2="135" stroke="#b8b8b8" stroke-width="1"/><line x1="868.5" y1="111.5" x2="868.5" y2="142.5" stroke="#b8b8b8" stroke-width="1"/><line x1="877.3" y1="111.5" x2="877.3" y2="142.5" stroke="#b8b8b8" stroke-width="1"/><line x1="886" y1="111.5" x2="886" y2="142.5" stroke="#b8b8b8" stroke-width="1"/><rect x="915.5" y="108" width="21.5" height="16" fill="#f2f2f2" stroke="#c8c8c8" stroke-width="1"/><rect x="907.8" y="119" width="36.8" height="21.5" rx="3" fill="url(#gPrint)" stroke="#bdbdbd" stroke-width="1"/><rect x="912.5" y="122.5" width="28" height="7" rx="3" fill="#a8a8a8"/><rect x="915.5" y="118" width="21.5" height="5.5" fill="#f2f2f2"/><rect x="915.5" y="135.5" width="21.8" height="9" fill="#f4f4f4" stroke="#c4c4c4" stroke-width="1"/><rect x="917.5" y="137.5" width="17.5" height="3.5" fill="#d8d8d8"/><circle cx="975.2" cy="127.1" r="17" fill="url(#gGray)" stroke="#b4b4b4" stroke-width="1"/><path d="M967 124.2 H974 V119 L984.5 127.1 L974 135.5 V130.2 H967Z" fill="#fff" stroke="#b8b8b8" stroke-width="0.6"/><circle cx="1032.5" cy="127.4" r="16.8" fill="#fff" stroke="#a8b0dc" stroke-width="1.2"/><circle cx="1032.5" cy="127.4" r="14.2" fill="url(#gInfo)"/><ellipse cx="1032" cy="119.4" rx="2.8" ry="2.4" fill="#fff"/><path d="M1029.3 123.5 H1034.5 V133.5 H1036 V136 H1029.3 V133.5 H1030.5 V126 H1029.3Z" fill="#fff"/><path d="M1079.5 125 V119 Q1079.5 109.5 1090 109.5 Q1100.5 109.5 1100.5 119 V125" fill="none" stroke="#8e9298" stroke-width="4.2"/><path d="M1079.5 125 V119 Q1079.5 109.5 1090 109.5 Q1100.5 109.5 1100.5 119 V125" fill="none" stroke="#d0d4da" stroke-width="1.6"/><rect x="1075.5" y="124.5" width="29.5" height="20" rx="2" fill="url(#gLock)" stroke="#d08a40" stroke-width="1"/><path d="M1089.8 129.5 a2.5 2.5 0 0 1 2 4 l0.8 6 h-5.6 l0.8 -6 a2.5 2.5 0 0 1 2 -4z" fill="#3a4456"/><rect x="1130.3" y="108.5" width="3.5" height="12" rx="1.5" fill="#5d9fd5"/><rect x="1143.6" y="108.5" width="3.5" height="12" rx="1.5" fill="#5d9fd5"/><path d="M1124.5 119.8 H1152.8 V123.6 H1151 V132 Q1151 138.5 1144 138.5 H1133.5 Q1126.5 138.5 1126.5 132 V123.6 H1124.5Z" fill="#5d9fd5"/><path d="M1140.5 125 L1136.5 131 H1139.5 L1137 136.5 L1142 129.5 H1139Z" fill="#fff"/><path d="M1134 140.5 H1144 V143.5 L1141 146.5 H1137 L1134 143.5Z" fill="#656a74"/><rect x="1186" y="114" width="9.5" height="27" rx="1" fill="#f2b660" stroke="#a07040" stroke-width="1"/><rect x="1187.5" y="116.5" width="5" height="22" fill="#fbf0d0"/><path d="M1169 114 Q1169 112 1171.5 111.5 L1184.5 110.5 Q1187 110.5 1187 113 V142 Q1187 144.5 1184.5 144.5 L1171.5 142.5 Q1169 142 1169 140Z" fill="#f4b862" stroke="#a07040" stroke-width="1"/><circle cx="1182" cy="127.5" r="1.1" fill="#8a6a40"/><path d="M1189.5 125 H1197.5 V121 L1206 127.3 L1197.5 134 V129.5 H1189.5Z" fill="#70e8a4" stroke="#3fb070" stroke-width="0.9" stroke-linejoin="round"/><circle cx="1272" cy="128" r="7.8" fill="none" stroke="#c4c4c4" stroke-width="1.3"/><path d="M1268.8 124.8 L1274.5 130.5 M1275 126.5 V131 H1270.5" fill="none" stroke="#c4c4c4" stroke-width="1.3"/><circle cx="1272" cy="79.5" r="7.8" fill="none" stroke="#c4c4c4" stroke-width="1.3"/><path d="M1268.8 76.3 L1274.5 82.0 M1275 78.0 V82.5 H1270.5" fill="none" stroke="#c4c4c4" stroke-width="1.3"/><path d="M29 176 q0 -2 2 -2 h5 l2 2 h7 q1.5 0 1.5 1.5 V187.5 H29Z" fill="#ffc054"/><path d="M29 176 q0 -2 2 -2 h5 l2 2.3 h8.5 V178 H29Z" fill="#6e6e6e"/><rect x="298.5" y="176.5" width="8.5" height="6" fill="none" stroke="#888" stroke-width="1"/><rect x="295.5" y="179.5" width="8.5" height="6" fill="#fff" stroke="#888" stroke-width="1"/><path d="M335 176.5 H341 V183 H335Z M333 183 H343 M338 183 V188" fill="none" stroke="#888" stroke-width="1.3"/><rect x="296.5" y="872.5" width="11" height="8" fill="none" stroke="#888" stroke-width="1.2"/><line x1="296.5" y1="873.5" x2="307.5" y2="873.5" stroke="#888" stroke-width="1.5"/><path d="M335 873 H341 V879 H335Z M333 879 H343 M338 879 V884" fill="none" stroke="#888" stroke-width="1.3"/><path d="M30.5 884.5 Q30.5 877.5 39 877 Q47.5 877.5 47.5 884.5Z" fill="#7cc044" stroke="#5a9a34" stroke-width="0.8"/><ellipse cx="38.9" cy="872.3" rx="4.6" ry="5.8" fill="#f2c89a" stroke="#b06838" stroke-width="0.7"/><path d="M34.3 872 Q34 866 39 866.3 Q44 866 43.5 872 Q42 869 39 869.3 Q36 869 34.3 872Z" fill="#c0703a"/><circle cx="333.7" cy="832.5" r="5.3" fill="none" stroke="#2a68cf" stroke-width="2.2"/><line x1="337.5" y1="836.3" x2="342.5" y2="841" stroke="#2a68cf" stroke-width="2.8" stroke-linecap="round"/><line x1="47.5" y1="232" x2="47.5" y2="705" stroke="#b0b0b0" stroke-width="1" stroke-dasharray="1 1"/><line x1="91.5" y1="244" x2="91.5" y2="348" stroke="#b0b0b0" stroke-width="1" stroke-dasharray="1 1"/><line x1="135.5" y1="377" x2="135.5" y2="618" stroke="#b0b0b0" stroke-width="1" stroke-dasharray="1 1"/><line x1="56" y1="223.5" x2="70" y2="223.5" stroke="#b0b0b0" stroke-width="1" stroke-dasharray="1 1"/><line x1="100" y1="267.5" x2="114" y2="267.5" stroke="#b0b0b0" stroke-width="1" stroke-dasharray="1 1"/><line x1="100" y1="311.5" x2="114" y2="311.5" stroke="#b0b0b0" stroke-width="1" stroke-dasharray="1 1"/><line x1="100" y1="355.5" x2="114" y2="355.5" stroke="#b0b0b0" stroke-width="1" stroke-dasharray="1 1"/><line x1="56" y1="661.5" x2="70" y2="661.5" stroke="#b0b0b0" stroke-width="1" stroke-dasharray="1 1"/><line x1="56" y1="705.5" x2="70" y2="705.5" stroke="#b0b0b0" stroke-width="1" stroke-dasharray="1 1"/><line x1="137" y1="397.5" x2="157" y2="397.5" stroke="#b0b0b0" stroke-width="1" stroke-dasharray="1 1"/><line x1="137" y1="441.5" x2="157" y2="441.5" stroke="#b0b0b0" stroke-width="1" stroke-dasharray="1 1"/><line x1="137" y1="485.5" x2="157" y2="485.5" stroke="#b0b0b0" stroke-width="1" stroke-dasharray="1 1"/><line x1="137" y1="529.5" x2="157" y2="529.5" stroke="#b0b0b0" stroke-width="1" stroke-dasharray="1 1"/><line x1="137" y1="573.5" x2="157" y2="573.5" stroke="#b0b0b0" stroke-width="1" stroke-dasharray="1 1"/><line x1="137" y1="616.5" x2="157" y2="616.5" stroke="#b0b0b0" stroke-width="1" stroke-dasharray="1 1"/><circle cx="47.9" cy="223.8" r="7" fill="none" stroke="#454a4a" stroke-width="1.5"/><path d="M44.9 220.8 L50.4 226.3 M50.9 222.3 V226.8 H46.4" fill="none" stroke="#454a4a" stroke-width="1.8"/><path d="M73.0 236.5 V212 q0 -1.5 1.5 -1.5 h10.5 l2 4.1 h19.1 q1.5 0 1.5 1.5 V236.5z" fill="url(#gFold)" stroke="#cf7a22" stroke-width="1"/><path d="M78.0 220.4 h8.2 l2 -1.5 h23.2 q1.5 0 1 1.5 L105.125 236.0 q-0.3 1 -1.3 1 H74.0 q-1.2 0 -0.9 -1.2z" fill="url(#gFoldO)" stroke="#cf7a22" stroke-width="1"/><circle cx="91.4" cy="267.7" r="7" fill="none" stroke="#9aa49c" stroke-width="1.5"/><path d="M87.4 267.7 H94.9 M91.9 264.7 L94.9 267.7 L91.9 270.7" fill="none" stroke="#9aa49c" stroke-width="1.3"/><path d="M116.8 279.8 V256.3 q0 -1.5 1.5 -1.5 h10.2 l2 4.0 h16.4 q1.5 0 1.5 1.5 V279.8 q0 1 -1 1 H117.8 q-1 0 -1 -1z" fill="url(#gFold)" stroke="#cf7a22" stroke-width="1"/><rect x="116.8" y="264.3" width="33" height="16.5" rx="1.5" fill="#e88a2a" stroke="#cf7a22" stroke-width="1"/><rect x="119.8" y="264.3" width="30" height="16.5" rx="1" fill="url(#gFoldF)" stroke="#cf7a22" stroke-width="0.8"/><line x1="120.8" y1="265.8" x2="148.3" y2="265.8" stroke="#ffe2a0" stroke-width="1"/><circle cx="91.4" cy="311.5" r="7" fill="none" stroke="#9aa49c" stroke-width="1.5"/><path d="M87.4 311.5 H94.9 M91.9 308.5 L94.9 311.5 L91.9 314.5" fill="none" stroke="#9aa49c" stroke-width="1.3"/><path d="M116.8 323.6 V300.1 q0 -1.5 1.5 -1.5 h10.2 l2 4.0 h16.4 q1.5 0 1.5 1.5 V323.6 q0 1 -1 1 H117.8 q-1 0 -1 -1z" fill="url(#gFold)" stroke="#cf7a22" stroke-width="1"/><rect x="116.8" y="308.1" width="33" height="16.5" rx="1.5" fill="#e88a2a" stroke="#cf7a22" stroke-width="1"/><rect x="119.8" y="308.1" width="30" height="16.5" rx="1" fill="url(#gFoldF)" stroke="#cf7a22" stroke-width="0.8"/><line x1="120.8" y1="309.6" x2="148.3" y2="309.6" stroke="#ffe2a0" stroke-width="1"/><circle cx="91.4" cy="355.3" r="7" fill="none" stroke="#454a4a" stroke-width="1.5"/><path d="M88.4 352.3 L93.9 357.8 M94.4 353.8 V358.3 H89.9" fill="none" stroke="#454a4a" stroke-width="1.8"/><path d="M116.8 368.0 V343.5 q0 -1.5 1.5 -1.5 h10.5 l2 4.1 h19.1 q1.5 0 1.5 1.5 V368.0z" fill="url(#gFold)" stroke="#cf7a22" stroke-width="1"/><path d="M121.8 351.9 h8.2 l2 -1.5 h23.2 q1.5 0 1 1.5 L148.925 367.5 q-0.3 1 -1.3 1 H117.8 q-1.2 0 -0.9 -1.2z" fill="url(#gFoldO)" stroke="#cf7a22" stroke-width="1"/><rect x="164.5" y="381.5" width="29" height="33" rx="2.5" fill="url(#gBook)" stroke="#4d70a8" stroke-width="1"/><rect x="164.5" y="381.5" width="6.3" height="33" rx="2" fill="url(#gSpine)"/><rect x="170.0" y="382.5" width="23.4" height="2.7" fill="#f2f2f6"/><rect x="164.5" y="425.3" width="29" height="33" rx="2.5" fill="url(#gBook)" stroke="#4d70a8" stroke-width="1"/><rect x="164.5" y="425.3" width="6.3" height="33" rx="2" fill="url(#gSpine)"/><rect x="170.0" y="426.3" width="23.4" height="2.7" fill="#f2f2f6"/><rect x="164.5" y="469.1" width="29" height="33" rx="2.5" fill="url(#gBook)" stroke="#4d70a8" stroke-width="1"/><rect x="164.5" y="469.1" width="6.3" height="33" rx="2" fill="url(#gSpine)"/><rect x="170.0" y="470.1" width="23.4" height="2.7" fill="#f2f2f6"/><rect x="164.5" y="512.9" width="29" height="33" rx="2.5" fill="url(#gBook)" stroke="#4d70a8" stroke-width="1"/><rect x="164.5" y="512.9" width="6.3" height="33" rx="2" fill="url(#gSpine)"/><rect x="170.0" y="513.9" width="23.4" height="2.7" fill="#f2f2f6"/><rect x="164.5" y="556.6999999999999" width="29" height="33" rx="2.5" fill="url(#gBook)" stroke="#4d70a8" stroke-width="1"/><rect x="164.5" y="556.6999999999999" width="6.3" height="33" rx="2" fill="url(#gSpine)"/><rect x="170.0" y="557.6999999999999" width="23.4" height="2.7" fill="#f2f2f6"/><rect x="164.5" y="600.5" width="29" height="33" rx="2.5" fill="url(#gBook)" stroke="#4d70a8" stroke-width="1"/><rect x="164.5" y="600.5" width="6.3" height="33" rx="2" fill="url(#gSpine)"/><rect x="170.0" y="601.5" width="23.4" height="2.7" fill="#f2f2f6"/><circle cx="47.9" cy="661.7" r="7" fill="none" stroke="#9aa49c" stroke-width="1.5"/><path d="M43.9 661.7 H51.4 M48.4 658.7 L51.4 661.7 L48.4 664.7" fill="none" stroke="#9aa49c" stroke-width="1.3"/><path d="M73.0 673.8 V650.3 q0 -1.5 1.5 -1.5 h10.2 l2 4.0 h16.4 q1.5 0 1.5 1.5 V673.8 q0 1 -1 1 H74.0 q-1 0 -1 -1z" fill="url(#gFold)" stroke="#cf7a22" stroke-width="1"/><rect x="73.0" y="658.3" width="33" height="16.5" rx="1.5" fill="#e88a2a" stroke="#cf7a22" stroke-width="1"/><rect x="76.0" y="658.3" width="30" height="16.5" rx="1" fill="url(#gFoldF)" stroke="#cf7a22" stroke-width="0.8"/><line x1="77.0" y1="659.8" x2="104.5" y2="659.8" stroke="#ffe2a0" stroke-width="1"/><circle cx="47.9" cy="705.5" r="7" fill="none" stroke="#9aa49c" stroke-width="1.5"/><path d="M43.9 705.5 H51.4 M48.4 702.5 L51.4 705.5 L48.4 708.5" fill="none" stroke="#9aa49c" stroke-width="1.3"/><path d="M73.0 717.6 V694.1 q0 -1.5 1.5 -1.5 h10.2 l2 4.0 h16.4 q1.5 0 1.5 1.5 V717.6 q0 1 -1 1 H74.0 q-1 0 -1 -1z" fill="url(#gFold)" stroke="#cf7a22" stroke-width="1"/><rect x="73.0" y="702.1" width="33" height="16.5" rx="1.5" fill="#e88a2a" stroke="#cf7a22" stroke-width="1"/><rect x="76.0" y="702.1" width="30" height="16.5" rx="1" fill="url(#gFoldF)" stroke="#cf7a22" stroke-width="0.8"/><line x1="77.0" y1="703.6" x2="104.5" y2="703.6" stroke="#ffe2a0" stroke-width="1"/><rect x="40.5" y="914.5" width="29" height="32.5" rx="2.5" fill="url(#gBook)" stroke="#4d70a8" stroke-width="1"/><rect x="40.5" y="914.5" width="6.3" height="32.5" rx="2" fill="url(#gSpine)"/><rect x="46.0" y="915.5" width="23.4" height="2.7" fill="#f2f2f6"/><path d="M129.5 926.5 L139.5 935 M139.5 926.5 L129.5 935" stroke="#1b9ae6" stroke-width="2.4"/><rect x="380.5" y="591.5" width="29" height="33" rx="2.5" fill="url(#gBook)" stroke="#4d70a8" stroke-width="1"/><rect x="380.5" y="591.5" width="6.3" height="33" rx="2" fill="url(#gSpine)"/><rect x="386.0" y="592.5" width="23.4" height="2.7" fill="#f2f2f6"/><circle cx="398" cy="185.5" r="17.6" fill="url(#gClock)" stroke="#c85850" stroke-width="0.8"/><circle cx="398" cy="185.5" r="13" fill="#eef2f8" stroke="#d86a62" stroke-width="1"/><circle cx="408.50" cy="185.50" r="0.6" fill="#8a9ab0"/><circle cx="405.42" cy="192.92" r="0.6" fill="#8a9ab0"/><circle cx="398.00" cy="196.00" r="0.6" fill="#8a9ab0"/><circle cx="390.58" cy="192.92" r="0.6" fill="#8a9ab0"/><circle cx="387.50" cy="185.50" r="0.6" fill="#8a9ab0"/><circle cx="390.58" cy="178.08" r="0.6" fill="#8a9ab0"/><circle cx="398.00" cy="175.00" r="0.6" fill="#8a9ab0"/><circle cx="405.42" cy="178.08" r="0.6" fill="#8a9ab0"/><line x1="398" y1="185.5" x2="386.5" y2="185.5" stroke="#d85a50" stroke-width="1.2"/><line x1="398" y1="185.5" x2="398" y2="197" stroke="#4a5a70" stroke-width="1.4"/><line x1="398" y1="185.5" x2="405.5" y2="177.5" stroke="#4a5a70" stroke-width="1.2"/><circle cx="398" cy="185.5" r="1.3" fill="#fff" stroke="#4a5a70" stroke-width="0.8"/><circle cx="443.1" cy="186.7" r="7.8" fill="none" stroke="#c4c4c4" stroke-width="1.3"/><path d="M439.90000000000003 183.5 L445.6 189.2 M446.1 185.2 V189.7 H441.6" fill="none" stroke="#c4c4c4" stroke-width="1.3"/><circle cx="1274.3" cy="186.7" r="7.8" fill="none" stroke="#c4c4c4" stroke-width="1.3"/><path d="M1271.1 183.5 L1276.8 189.2 M1277.3 185.2 V189.7 H1272.8" fill="none" stroke="#c4c4c4" stroke-width="1.3"/><circle cx="38.8" cy="971.4" r="9.6" fill="#4d7fbd"/><circle cx="38.8" cy="966.5" r="1.5" fill="#fff"/><rect x="37.4" y="969" width="2.8" height="8" fill="#fff"/><rect x="244" y="961.5" width="15" height="18" rx="2" fill="url(#gDB)" stroke="#c88838" stroke-width="0.8"/><line x1="244.5" y1="967.5" x2="258.5" y2="967.5" stroke="#d87a30" stroke-width="0.9"/><line x1="244.5" y1="973.3" x2="258.5" y2="973.3" stroke="#d87a30" stroke-width="0.9"/><path d="M412.5 979.5 Q412.5 973 421 972.5 Q429.8 973 429.8 979.5Z" fill="#84c040" stroke="#5a9030" stroke-width="0.7"/><ellipse cx="421" cy="968.5" rx="4.8" ry="6" fill="#f2c898" stroke="#b06838" stroke-width="0.7"/><path d="M416.2 968 Q416 962 421 962.3 Q426 962 425.8 968 Q424.5 965 421 965.3 Q417.5 965 416.2 968Z" fill="#c0703a"/><rect x="591.5" y="962.5" width="17" height="17" fill="#f2f6fe" stroke="#7e90d0" stroke-width="1"/><rect x="591.5" y="962.5" width="17" height="5" fill="#e26a52"/><text x="600" y="978" font-size="10.5" font-weight="bold" text-anchor="middle" fill="#2a3450" font-family="Liberation Sans">31</text><path d="M1283.0 969.5 H1286.0 M1284.5 968.0 V971.0" stroke="#707070" stroke-width="1"/><path d="M1278.0 974.5 H1281.0 M1279.5 973.0 V976.0" stroke="#707070" stroke-width="1"/><path d="M1283.0 974.5 H1286.0 M1284.5 973.0 V976.0" stroke="#707070" stroke-width="1"/><path d="M1273.0 979.5 H1276.0 M1274.5 978.0 V981.0" stroke="#707070" stroke-width="1"/><path d="M1278.0 979.5 H1281.0 M1279.5 978.0 V981.0" stroke="#707070" stroke-width="1"/><path d="M1283.0 979.5 H1286.0 M1284.5 978.0 V981.0" stroke="#707070" stroke-width="1"/></svg>
</body></html>
